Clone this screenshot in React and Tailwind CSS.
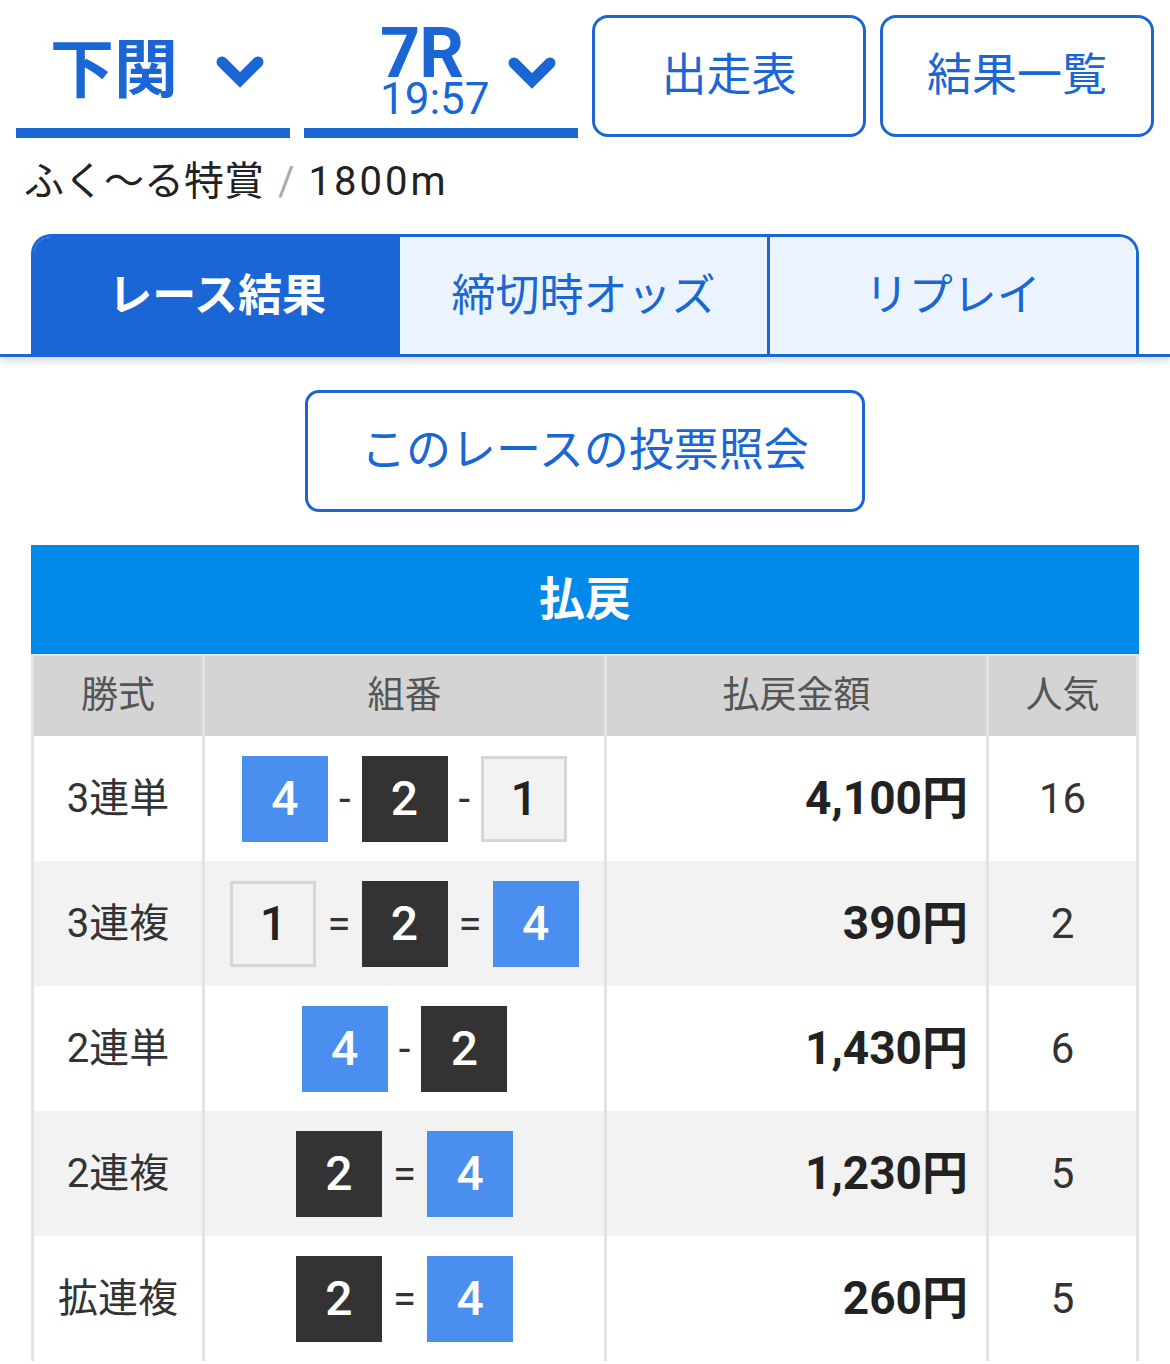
import React from "react";

const BLUE = "#1b66d5";

const ROWS = [
  { type: "3連単", combo: [4, "-", 2, "-", 1], amount: "4,100円", pop: "16" },
  { type: "3連複", combo: [1, "=", 2, "=", 4], amount: "390円", pop: "2" },
  { type: "2連単", combo: [4, "-", 2], amount: "1,430円", pop: "6" },
  { type: "2連複", combo: [2, "=", 4], amount: "1,230円", pop: "5" },
  { type: "拡連複", combo: [2, "=", 4], amount: "260円", pop: "5" },
];

const BOX_STYLE = {
  1: "bg-[#f2f2f2] text-[#222] border-[3px] border-[#d6d6d6]",
  2: "bg-[#333333] text-white",
  4: "bg-[#4a8ef0] text-white",
};

function Chevron() {
  return (
    <svg width="48" height="34" viewBox="0 0 48 34" className="shrink-0">
      <path
        d="M6 8 L24 26 L42 8"
        fill="none"
        stroke={BLUE}
        strokeWidth="11"
        strokeLinecap="round"
        strokeLinejoin="miter"
      />
    </svg>
  );
}

function Combo({ items }) {
  return (
    <div className="flex items-center justify-center">
      {items.map((it, i) =>
        typeof it === "number" ? (
          <div
            key={i}
            className={`w-[86px] h-[86px] flex items-center justify-center text-[48px] font-medium leading-none ${BOX_STYLE[it]}`}
          >
            {it}
          </div>
        ) : (
          <span key={i} className="mx-[11px] text-[42px] text-[#333] leading-none">
            {it}
          </span>
        )
      )}
    </div>
  );
}

export default function App() {
  return (
    <div className="w-[1170px] min-h-[1364px] bg-white font-[Roboto,'Noto_Sans_CJK_JP',sans-serif] overflow-hidden">
      {/* top selectors and buttons */}
      <div className="grid grid-cols-4 gap-x-[14px] px-4 items-start">
        <div className="h-[138px] border-b-[10px] border-[#1b66d5] flex items-center pl-[34px] pt-[14px] gap-[38px]">
          <span className="text-[64px] font-bold text-[#1b66d5] leading-none">下関</span>
          <Chevron />
        </div>
        <div className="h-[138px] border-b-[10px] border-[#1b66d5] flex items-center pl-[76px] pt-[16px] gap-[18px]">
          <div className="flex flex-col items-start text-[#1b66d5]">
            <span className="text-[70px] font-bold leading-[54px] tracking-[-1px]">7R</span>
            <span className="text-[44px] leading-[38px]">19:57</span>
          </div>
          <Chevron />
        </div>
        <button className="mt-[15px] h-[122px] rounded-[16px] border-[3px] border-[#1b66d5] text-[#1b66d5] text-[45px] flex items-center justify-center">
          出走表
        </button>
        <button className="mt-[15px] h-[122px] rounded-[16px] border-[3px] border-[#1b66d5] text-[#1b66d5] text-[45px] flex items-center justify-center">
          結果一覧
        </button>
      </div>

      {/* race name */}
      <div className="mt-[14px] h-[60px] pl-[24px] flex items-center text-[40px] text-[#222]">
        <span>ふく〜る特賞</span>
        <span className="mx-[14px] text-[#aaa]">/</span>
        <span className="tracking-[3px]">1800m</span>
      </div>

      {/* tabs */}
      <div className="mt-[22px] border-b-[3px] border-[#1b66d5] shadow-[0_5px_6px_rgba(0,0,0,0.12)]">
        <div className="mx-[31px] h-[120px] flex border-t-[3px] border-x-[3px] border-[#1b66d5] rounded-t-[20px] overflow-hidden">
          <div className="flex-1 bg-[#1b66d5] text-white font-bold text-[44px] flex items-center justify-center">
            レース結果
          </div>
          <div className="flex-1 bg-[#eaf3fe] text-[#1b66d5] text-[44px] flex items-center justify-center">
            締切時オッズ
          </div>
          <div className="flex-1 bg-[#eaf3fe] border-l-[3px] border-[#1b66d5] text-[#1b66d5] text-[44px] flex items-center justify-center">
            リプレイ
          </div>
        </div>
      </div>

      {/* bet inquiry */}
      <div className="mt-[33px] flex justify-center">
        <button className="w-[560px] h-[122px] rounded-[14px] border-[3px] border-[#1b66d5] text-[#1b66d5] text-[45px] flex items-center justify-center">
          このレースの投票照会
        </button>
      </div>

      {/* payouts */}
      <div className="mt-[33px] mx-[31px]">
        <div className="h-[109px] bg-[#0089e9] text-white font-bold text-[46px] flex items-center justify-center">
          払戻
        </div>
        <div className="bg-[#e3e3e3] px-[3px] pt-[2px]">
          <div className="grid grid-cols-[168px_399px_379px_147px] gap-x-[3px] h-[80px] text-[37px] text-[#555]">
            <div className="bg-[#d4d4d4] flex items-center justify-center">勝式</div>
            <div className="bg-[#d4d4d4] flex items-center justify-center">組番</div>
            <div className="bg-[#d4d4d4] flex items-center justify-center">払戻金額</div>
            <div className="bg-[#d4d4d4] flex items-center justify-center">人気</div>
          </div>
          {ROWS.map((r, i) => {
            const bg = i % 2 === 0 ? "bg-white" : "bg-[#f2f2f2]";
            return (
              <div
                key={r.type}
                className="grid grid-cols-[168px_399px_379px_147px] gap-x-[3px] h-[125px] text-[#333]"
              >
                <div className={`${bg} flex items-center justify-center text-[40px]`}>{r.type}</div>
                <div className={`${bg} flex items-center justify-center`}>
                  <Combo items={r.combo} />
                </div>
                <div className={`${bg} flex items-center justify-end pr-[18px] text-[46px] font-bold text-[#222]`}>
                  {r.amount}
                </div>
                <div className={`${bg} flex items-center justify-center text-[42px]`}>{r.pop}</div>
              </div>
            );
          })}
        </div>
      </div>
    </div>
  );
}
